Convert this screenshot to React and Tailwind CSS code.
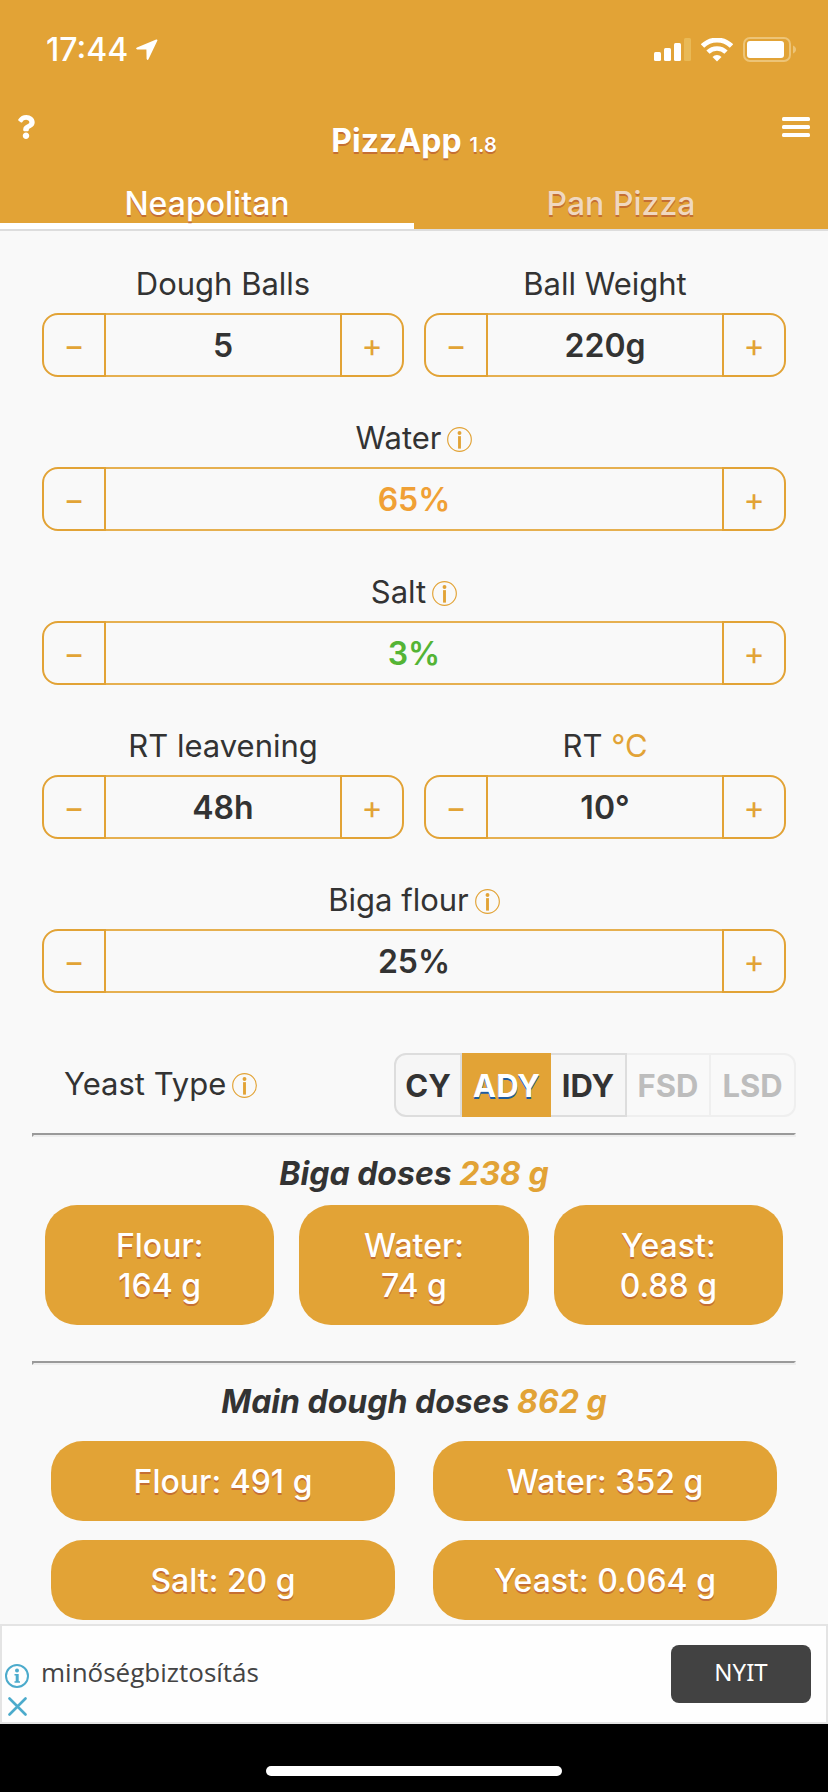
import React, { useState } from 'react';
import { FaQuestion } from 'react-icons/fa';

const InfoButton = ({ label }) => (
  <button type="button" aria-label={label} className="mt-0.5 shrink-0 text-[#e2a336]">
    <svg width="25" height="25" viewBox="0 0 26 26" fill="none" className="block">
      <circle cx="13" cy="13" r="12.3" stroke="currentColor" strokeWidth="1.2" />
      <circle cx="13" cy="6.2" r="2" fill="currentColor" />
      <path d="M13 9.500v13" stroke="currentColor" strokeWidth="3" />
    </svg>
  </button>
);

const Stepper = ({ id, label, unit, accent, info, value, min = 0, onChange, wide, color = 'text-[#333333]' }) => (
  <div className={wide ? 'col-span-2' : ''}>
    <div className="flex h-[46px] items-center justify-center gap-1.5">
      <label htmlFor={id} className="text-[31px] leading-[46px] text-[#333333]">
        {label}
        {accent && <span className="text-[#e2a336]"> {accent}</span>}
      </label>
      {info && <InfoButton label={`${label} info`} />}
    </div>
    <div className="mt-1.5 flex h-16">
      <button
        type="button"
        aria-label={`Decrease ${label}`}
        onClick={() => onChange(Math.max(min, value - 1))}
        className="w-16 shrink-0 rounded-l-2xl border-2 border-[#e2a336] pt-0.5 text-[32px] leading-none text-[#e2a336]"
      >
        −
      </button>
      <input
        id={id}
        type="text"
        readOnly
        value={`${value}${unit}`}
        className={`w-full min-w-0 border-y-2 border-[#e6b050] bg-transparent pt-0.5 text-center text-[32px] font-semibold outline-none ${color}`}
      />
      <button
        type="button"
        aria-label={`Increase ${label}`}
        onClick={() => onChange(value + 1)}
        className="w-16 shrink-0 rounded-r-2xl border-2 border-[#e2a336] pt-0.5 text-[32px] leading-none text-[#e2a336]"
      >
        +
      </button>
    </div>
  </div>
);

const StatusBar = () => (
  <div className="flex h-[99px] items-center justify-between pr-8 pl-[46px]">
    <div className="flex items-center gap-2">
      <span className="text-[32px] leading-10 font-medium">17:44</span>
      <svg width="22" height="22" viewBox="0 0 22 22" fill="currentColor">
        <path d="M20.2.6 1 8.4C-.3 9-.1 10.3 1.2 10.4l9.2.2.2 9.2c.1 1.3 1.500 1.500 2 .2l8.700-18.200c.4-.9-.2-1.600-1.100-1.200Z" />
      </svg>
    </div>
    <div className="flex items-center gap-2.5">
      <svg width="37" height="24" viewBox="0 0 37 24" fill="currentColor">
        <rect x="0" y="14" width="7" height="9" rx="1.500" />
        <rect x="10" y="10" width="7" height="13" rx="1.500" />
        <rect x="20" y="5" width="7" height="18" rx="1.500" />
        <rect x="30" y="0" width="7" height="23" rx="1.500" fill="#e9b956" />
      </svg>
      <svg width="32" height="24" viewBox="0 0 32 24" fill="none" stroke="currentColor">
        <path d="M1.500 8a20.500 20.500 0 0 1 29 0" strokeWidth="4.800" />
        <path d="M7 14.200a12.700 12.700 0 0 1 18 0" strokeWidth="4.600" />
        <path d="m16 23.500-4.500-4.600a6.400 6.400 0 0 1 9 0Z" fill="currentColor" stroke="none" />
      </svg>
      <svg width="53" height="25" viewBox="0 0 53 25">
        <rect x="1" y="1" width="46" height="23" rx="6" fill="none" stroke="#edc477" strokeWidth="2" />
        <rect x="4" y="4" width="37" height="17" rx="3" fill="#fff" />
        <path d="M50 8.500c4 1.500 4 6.500 0 8Z" fill="#edc477" />
      </svg>
    </div>
  </div>
);

const Divider = () => (
  <hr className="h-1 border-2 border-t-[#9a9a9a] border-r-[#eeeeee] border-b-[#eeeeee] border-l-[#9a9a9a]" />
);

const shadow = '[text-shadow:0_2px_0_#c56f33]';

const yeastTypes = [
  { name: 'CY', style: 'w-[68px] rounded-l-xl border-l-2' },
  { name: 'ADY', style: 'w-[89px]' },
  { name: 'IDY', style: 'w-[76px]' },
  { name: 'FSD', style: 'w-[84px]', disabled: true },
  { name: 'LSD', style: 'w-[85px] rounded-r-xl', disabled: true }
];

const bigaDoses = [
  { name: 'Flour', amount: '164 g' },
  { name: 'Water', amount: '74 g' },
  { name: 'Yeast', amount: '0.88 g' }
];

const mainDoses = [
  { name: 'Flour', amount: '491 g' },
  { name: 'Water', amount: '352 g' },
  { name: 'Salt', amount: '20 g' },
  { name: 'Yeast', amount: '0.064 g' }
];

const App = () => {
  const [recipe, setRecipe] = useState({
    balls: 5,
    weight: 220,
    water: 65,
    salt: 3,
    hours: 48,
    temp: 10,
    biga: 25
  });
  const [tab, setTab] = useState('Neapolitan');
  const [yeast, setYeast] = useState('ADY');

  const update = (key) => (value) => setRecipe(prev => ({ ...prev, [key]: value }));

  return (
    <div className="flex min-h-screen flex-col bg-[#f9f9f9] font-['Inter',sans-serif] text-[#333333]">
      <header className="border-b-2 border-[#dddddd] bg-[#e2a336] text-white">
        <StatusBar />

        <div className="flex h-[84px] justify-between px-[18px]">
          <button type="button" aria-label="Help" className="flex h-[55px] w-7 items-center">
            <FaQuestion size={24} className="-ml-1" />
          </button>
          <h1 className={`flex items-baseline gap-2 text-[32px] leading-[84px] font-bold ${shadow}`}>
            PizzApp <small className="text-xl font-semibold">1.8</small>
          </h1>
          <button type="button" aria-label="Menu" className="flex h-[55px] w-7 items-center">
            <svg width="28" height="20" viewBox="0 0 28 20" fill="currentColor">
              <rect width="28" height="4" rx="1.500" />
              <rect y="8" width="28" height="4" rx="1.500" />
              <rect y="16" width="28" height="4" rx="1.500" />
            </svg>
          </button>
        </div>

        <nav className="grid grid-cols-2">
          {['Neapolitan', 'Pan Pizza'].map(name => (
            <button
              key={name}
              type="button"
              onClick={() => setTab(name)}
              className={`border-b-6 pt-0.5 text-[32px] leading-[38px] font-medium ${shadow} ${tab === name ? 'border-white text-white' : 'border-transparent text-[#f0d8bf]'}`}
            >
              {name}
            </button>
          ))}
        </nav>
      </header>

      <main className="px-8 pt-[30px] pb-1">
        <div className="grid grid-cols-2 gap-x-5 gap-y-[38px] px-2.5">
          <Stepper id="balls" label="Dough Balls" unit="" value={recipe.balls} onChange={update('balls')} />
          <Stepper id="weight" label="Ball Weight" unit="g" value={recipe.weight} onChange={update('weight')} />
          <Stepper id="water" label="Water" unit="%" info wide color="text-[#f0a035]" value={recipe.water} onChange={update('water')} />
          <Stepper id="salt" label="Salt" unit="%" info wide color="text-[#54b435]" value={recipe.salt} onChange={update('salt')} />
          <Stepper id="hours" label="RT leavening" unit="h" value={recipe.hours} onChange={update('hours')} />
          <Stepper id="temp" label="RT" accent="°C" unit="°" value={recipe.temp} onChange={update('temp')} />
          <Stepper id="biga" label="Biga flour" unit="%" info wide value={recipe.biga} onChange={update('biga')} />
        </div>

        <div className="mt-[60px] mb-4 flex h-16 items-center justify-between pl-8">
          <div className="flex items-center gap-1.5 pb-0.5">
            <span className="text-[31px] leading-[46px]">Yeast Type</span>
            <InfoButton label="Yeast Type info" />
          </div>
          <div className="flex h-16" role="group" aria-label="Yeast Type">
            {yeastTypes.map(({ name, style, disabled }) => (
              <button
                key={name}
                type="button"
                disabled={disabled}
                onClick={() => setYeast(name)}
                className={`pt-0.5 text-[31px] font-bold ${style} ${
                  yeast === name
                    ? 'bg-[#e2a336] text-white [text-shadow:0_2px_0_#1e5c9e]'
                    : disabled
                      ? 'border-y-2 border-r-2 border-[#efefef] text-[#bdbdbd]'
                      : 'border-y-2 border-r-2 border-[#dddddd] bg-[#f6f6f6]'
                }`}
              >
                {name}
              </button>
            ))}
          </div>
        </div>

        <Divider />
        <h2 className="mt-[17px] mb-[11px] text-center text-[32px] leading-10 font-bold italic">
          Biga doses <span className="text-[#e2a336]">238 g</span>
        </h2>
        <div className="mb-9 grid grid-cols-3 gap-[25px] px-[13px]">
          {bigaDoses.map(dose => (
            <div key={dose.name} className={`rounded-[32px] bg-[#e2a336] pt-[21px] pb-[19px] text-center text-[32px] leading-10 font-medium text-white ${shadow}`}>
              <div>{dose.name}:</div>
              <div>{dose.amount}</div>
            </div>
          ))}
        </div>

        <Divider />
        <h2 className="mt-[17px] mb-[19px] text-center text-[32px] leading-10 font-bold italic">
          Main dough doses <span className="text-[#e2a336]">862 g</span>
        </h2>
        <div className="grid grid-cols-2 gap-x-[38px] gap-y-[19px] px-[19px]">
          {mainDoses.map(dose => (
            <div key={dose.name} className={`rounded-[32px] bg-[#e2a336] pt-[21px] pb-[19px] text-center text-[32px] leading-10 font-medium text-white ${shadow}`}>
              {dose.name}: {dose.amount}
            </div>
          ))}
        </div>
      </main>

      {/* Ad banner */}
      <aside className="flex h-[100px] items-center justify-between border-2 border-[#e4e4e4] bg-[#fefefe] pr-[15px] pl-[3px]">
        <div className="flex items-center gap-3 pb-1">
          <div className="flex flex-col items-center gap-[9px] pt-9 text-[#4cabcc]">
            <button type="button" aria-label="About this ad">
              <svg width="24" height="24" viewBox="0 0 24 24" fill="none" className="block">
                <circle cx="12" cy="12" r="11" stroke="currentColor" strokeWidth="2" />
                <circle cx="12" cy="6.500" r="2" fill="currentColor" />
                <path d="M9.500 10h4.200v7.300h1.300v1.500H9.500v-1.500h1.200v-5.800H9.500Z" fill="currentColor" />
              </svg>
            </button>
            <button type="button" aria-label="Close ad">
              <svg width="19" height="19" viewBox="0 0 19 19" fill="none" stroke="currentColor" strokeWidth="2.600" strokeLinecap="round" className="block">
                <path d="m1.500 1.500 16 16M17.500 1.500l-16 16" />
              </svg>
            </button>
          </div>
          <span className="font-['Open_Sans',sans-serif] text-[26px] leading-8 text-[#444444]">minőségbiztosítás</span>
        </div>
        <button type="button" className="h-[58px] w-[140px] rounded-lg bg-[#424242] pb-1 font-['Noto_Sans',sans-serif] text-2xl text-white">
          NYIT
        </button>
      </aside>

      <footer className="flex grow items-start justify-center bg-black pt-[42px] pb-4">
        <div className="h-2.5 w-[296px] rounded-full bg-white" />
      </footer>
    </div>
  );
};

export default App;
